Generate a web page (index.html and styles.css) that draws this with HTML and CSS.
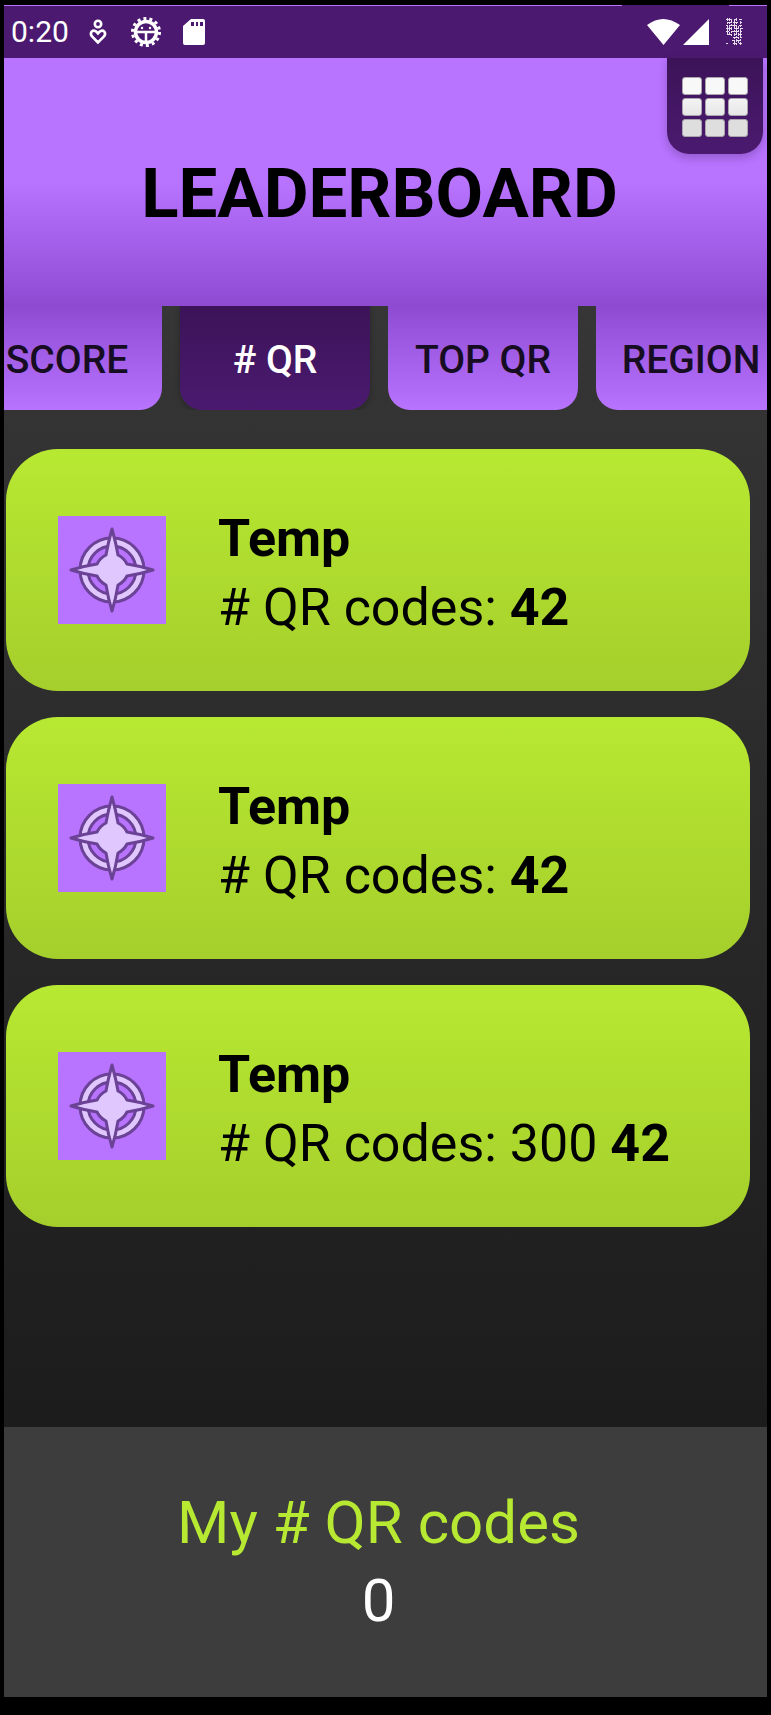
FILE: index.html
```html
<!DOCTYPE html>
<html lang="en">
<head>
<meta charset="utf-8">
<meta name="viewport" content="width=device-width, initial-scale=1">
<title>Leaderboard</title>
<link rel="stylesheet" href="styles.css">
</head>
<body>
<svg class="defs" aria-hidden="true">
  <symbol id="compass" viewBox="0 0 108 108">
    <circle cx="54" cy="54" r="28" fill="none" stroke="#6b4296" stroke-width="11"/>
    <circle cx="54" cy="54" r="28" fill="none" stroke="#e0c8ff" stroke-width="5"/>
    <path d="M54 13 Q58 27 60 39 Q66 42 69 48 Q82 50 95 54 Q82 58 69 60 Q66 66 60 69 Q58 82 54 95 Q50 82 48 69 Q42 66 39 60 Q26 58 13 54 Q26 50 39 48 Q42 42 48 39 Q50 27 54 13Z" fill="#e0c8ff" stroke="#6b4296" stroke-width="3" stroke-linejoin="round"/>
  </symbol>
</svg>
<div class="screen">
  <div class="status-bar">
    <span class="clock">0:20</span>
    <svg class="status-icon care" viewBox="0 0 20 28" fill="none" stroke="#fff" stroke-width="2.6"><circle cx="10" cy="6" r="3.2"/><path d="M10 24.5 L4 18.500 Q2 16 3.600 13.600 Q6.500 11 10 15.500 Q13.500 11 16.400 13.600 Q18 16 16 18.500Z"/></svg>
    <svg class="status-icon bug" viewBox="0 0 32 32"><circle cx="16" cy="16" r="13.5" fill="none" stroke="#fff" stroke-width="3" stroke-dasharray="3 3.058"/><circle cx="16" cy="16" r="10.500" fill="none" stroke="#fff" stroke-width="3.5"/><path d="M5 16h22M16 16v11" stroke="#fff" stroke-width="2.5"/><circle cx="12" cy="12" r="1.200" fill="#fff"/><circle cx="20" cy="12" r="1.200" fill="#fff"/></svg>
    <svg class="status-icon card-icon" viewBox="0 0 22 28"><path fill="#fff" fill-rule="evenodd" d="M8 1H20Q22 1 22 3V25Q22 27 20 27H2Q0 27 0 25V8ZM8 4v4h3v-4zM13 4v4h2v-4zM17 4v4h3v-4z"/></svg>
    <span class="spacer"></span>
    <svg class="status-icon signals" viewBox="0 0 64 28"><path fill="#fff" d="M0 7Q16-5 33 7L16.500 27ZM62 1V27H36Z"/></svg>
    <svg class="status-icon battery" viewBox="0 0 17 28" stroke="#e6dcec" fill="none"><path d="M0 1.500h6M8 1.500h3M13 1.500h3M1 4.500h4M7 4.500h5M14 4.500h2M0 7.500h2M4 7.500h7M13 7.500h3M0 10.500h6M9 10.500h4M15 10.500h2M0 13.500h3M5 13.500h7M14 13.500h2M1 16.500h5M8 16.500h3M13 16.500h3M7 19.500h5M14 19.500h2M6 22.500h3M11 22.500h4M0 25.500h2M7 25.500h4M13 25.500h3"/><path stroke-dasharray="3 1 2 1" d="M1.500 0v18M3.500 0v18M5.500 2v16M8.500 1v26M10.500 0v27M12.500 8v18M14.500 3v24"/></svg>
  </div>
  <header class="header">
    <h1 class="title">LEADERBOARD</h1>
    <button class="menu" aria-label="Menu">
      <span></span><span></span><span></span><span></span><span></span><span></span><span></span><span></span><span></span>
    </button>
  </header>
  <main class="content">
    <nav class="tabs">
      <button class="tab">SCORE</button>
      <button class="tab active"># QR</button>
      <button class="tab">TOP QR</button>
      <button class="tab">REGION</button>
    </nav>
    <ul class="list">
      <li class="entry"><svg class="avatar" aria-hidden="true"><use href="#compass"/></svg><div class="entry-text"><strong>Temp</strong><p># QR codes: <b>42</b></p></div></li>
      <li class="entry"><svg class="avatar" aria-hidden="true"><use href="#compass"/></svg><div class="entry-text"><strong>Temp</strong><p># QR codes: <b>42</b></p></div></li>
      <li class="entry"><svg class="avatar" aria-hidden="true"><use href="#compass"/></svg><div class="entry-text"><strong>Temp</strong><p># QR codes: 300 <b>42</b></p></div></li>
    </ul>
  </main>
  <footer class="summary">
    <p class="summary-label">My # QR codes</p>
    <p class="summary-value">0</p>
  </footer>
</div>
</body>
</html>
```
FILE: styles.css
```css
* { box-sizing: border-box; }
body { margin: 0; background: #000; font-family: Roboto, "Liberation Sans", sans-serif; color: #000; }
h1, p, ul { margin: 0; padding: 0; }
button { border: 0; padding: 0; font-family: inherit; }
.defs { position: absolute; width: 0; height: 0; }
.screen { min-height: 100vh; padding: 5px 4px 18px; display: flex; flex-direction: column; }
.status-bar { height: 53px; display: flex; align-items: center; padding: 1px 24px 0 7px; background: linear-gradient(90deg, #b873ff 81%, #4b1a70 81% 95%, #b873ff 95%) top / 100% 1px no-repeat #4b1a70; }
.clock { color: #fff; font-size: 30px; line-height: 36px; }
.status-icon { flex: none; height: 28px; }
.care { width: 20px; margin-left: 19px; }
.status-icon.bug { width: 32px; height: 32px; margin-left: 22px; }
.card-icon { width: 22px; margin-left: 21px; }
.spacer { flex: 1; }
.signals { width: 64px; margin-right: 15px; }
.battery { width: 17px; }
.header { position: relative; height: 248px; padding: 0 16px 0 4px; display: flex; align-items: center; justify-content: center; background: linear-gradient(#b873ff 50%, #8e4bd2); }
.title { font-size: 69px; line-height: 80px; padding-top: 24px; }
.menu { position: absolute; top: 0; right: 4px; width: 96px; height: 96px; padding: 19px 15px 17px; display: grid; grid-template-columns: repeat(3, 1fr); gap: 3px; background: linear-gradient(#3c1358, #4b1a70); border-radius: 0 0 22px 22px; box-shadow: 0 4px 10px #0003; }
.menu span { border: 1px solid #aaa5ad; border-radius: 3px; background: #f8f8f8; }
.menu span:nth-child(n+4) { background: linear-gradient(#f3f3f3, #e7e7e7); }
.menu span:nth-child(n+7) { background: #dedede; }
.content { flex: 1; background: linear-gradient(#363636, #1c1c1c); }
.tabs { display: flex; justify-content: flex-start; gap: 18px; height: 104px; overflow: hidden; }
.tab { flex: none; width: 190px; padding-top: 4px; font-size: 39px; line-height: 48px; font-weight: 500; color: #170d22; background: linear-gradient(#8e4bd2, #b873ff); border-radius: 0 0 22px 22px; }
.tab:first-child { margin-left: -32px; }
.tab.active { color: #fff; background: linear-gradient(#3c1358, #4b1a70); box-shadow: 0 2px 6px #0004; }
.list { list-style: none; padding: 39px 17px 26px 2px; display: flex; flex-direction: column; gap: 26px; }
.entry { min-height: 242px; padding: 0 52px; display: flex; align-items: center; gap: 52px; font-size: 52px; line-height: 69px; border-radius: 52px; background: linear-gradient(#b8e932, #b4e330 20%, #a5cf2c); }
.avatar { flex: none; width: 108px; height: 108px; background: #b873ff; }
.entry-text { padding-top: 6px; }
.entry strong { display: block; }
.summary { min-height: 270px; padding: 57px 14px 0 0; text-align: center; background: #3d3d3d; font-size: 60px; line-height: 78px; }
.summary-label { color: #b8e932; }
.summary-value { color: #fff; }
```
